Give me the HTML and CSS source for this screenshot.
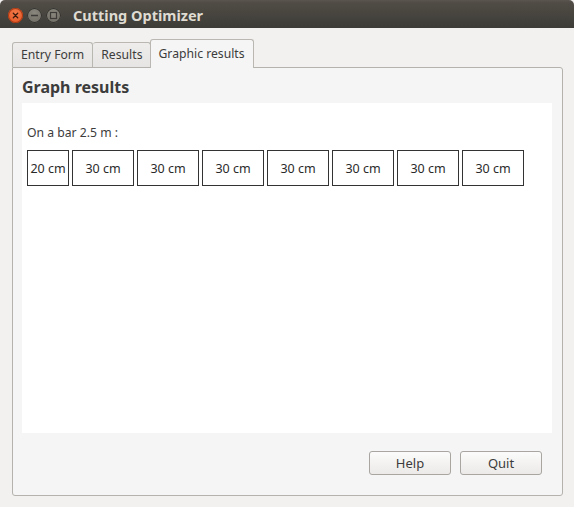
FILE: index.html
```html
<!DOCTYPE html>
<html>
<head>
<meta charset="utf-8">
<link rel="stylesheet" href="styles.css">
</head>
<body>
<div class="window">
  <div class="titlebar">
    <div class="wbtns">
      <span class="wbtn close"><svg width="15" height="15" viewBox="0 0 15 15"><path d="M5.3 5.3 L9.7 9.7 M9.7 5.3 L5.3 9.7" stroke="#3a1a0c" stroke-width="1.3" stroke-linecap="round"/></svg></span>
      <span class="wbtn"><svg width="15" height="15" viewBox="0 0 15 15"><path d="M4 7.5 H11" stroke="#3c3b37" stroke-width="1.5"/></svg></span>
      <span class="wbtn"><svg width="15" height="15" viewBox="0 0 15 15"><rect x="4.5" y="4.5" width="6" height="6" fill="none" stroke="#3c3b37" stroke-width="1.2"/></svg></span>
    </div>
    <span class="title">Cutting Optimizer</span>
  </div>
  <div class="content">
    <div class="tabs">
      <div class="tab">Entry Form</div>
      <div class="tab">Results</div>
      <div class="tab active">Graphic results</div>
    </div>
    <div class="pane">
      <h1 class="heading">Graph results</h1>
      <div class="canvas">
        <div class="caption">On a bar 2.5 m :</div>
        <div class="bars">
          <div class="piece short">20 cm</div>
          <div class="piece">30 cm</div>
          <div class="piece">30 cm</div>
          <div class="piece">30 cm</div>
          <div class="piece">30 cm</div>
          <div class="piece">30 cm</div>
          <div class="piece">30 cm</div>
          <div class="piece">30 cm</div>
        </div>
      </div>
      <div class="actions">
        <button class="btn">Help</button>
        <button class="btn">Quit</button>
      </div>
    </div>
  </div>
</div>
</body>
</html>
```
FILE: styles.css
```css
html, body {
  margin: 0;
  padding: 0;
  background: #f2f1f0;
}
.window {
  width: 574px;
  height: 507px;
  background: #f2f1f0;
  font-family: "Noto Sans", "Open Sans", sans-serif;
  color: #3c3c3c;
  overflow: hidden;
}
.titlebar {
  height: 28px;
  background: linear-gradient(#5a564f 0px, #504c45 3px, #3d3c38 28px);
  border-top-left-radius: 5px;
  border-top-right-radius: 5px;
  display: flex;
  align-items: center;
  box-sizing: border-box;
  padding-left: 8px;
}
.wbtns {
  display: flex;
  gap: 4px;
  margin-top: 2px;
}
.wbtn {
  width: 15px;
  height: 15px;
  border-radius: 50%;
  background: radial-gradient(circle at 50% 35%, #8a877f, #6a675f);
  box-shadow: inset 0 0 0 1px #34332f;
  display: flex;
}
.wbtn.close {
  background: radial-gradient(circle at 50% 35%, #f47a4a, #e2501e);
  box-shadow: inset 0 0 0 1px #a83a14;
}
.title {
  margin-left: 12px;
  font-weight: bold;
  font-size: 14.5px;
  color: #dfdbd2;
  margin-top: 1px;
}
.content {
  padding: 11px 11px 0 12px;
}
.tabs {
  display: flex;
  align-items: flex-end;
  height: 28px;
  position: relative;
  z-index: 1;
}
.tab {
  height: 25px;
  box-sizing: border-box;
  border: 1px solid #bab7b2;
  border-bottom: none;
  border-radius: 3px 3px 0 0;
  background: linear-gradient(#eeedeb, #e6e5e3);
  font-size: 12.2px;
  line-height: 24px;
  padding: 0 8px;
  color: #3c3c3c;
}
.tab + .tab {
  border-left: none;
}
.tab.active {
  height: 29px;
  margin-bottom: -1px;
  background: #f5f5f5;
  line-height: 27px;
  border-left: 1px solid #bab7b2;
  margin-left: -1px;
  padding: 0 8px 0 7px;
}
.pane {
  width: 551px;
  height: 429px;
  box-sizing: border-box;
  border: 1px solid #b5b2ad;
  border-radius: 0 3px 3px 3px;
  background: #f5f5f5;
  padding: 0 10px 0 9px;
  display: flex;
  flex-direction: column;
}
.heading {
  margin: 0;
  height: 35px;
  font-size: 16px;
  font-weight: bold;
  line-height: 38px;
  color: #3c3c3c;
}
.canvas {
  background: #ffffff;
  height: 330px;
  padding: 21px 0 0 5px;
  box-sizing: border-box;
}
.caption {
  font-size: 12.2px;
  line-height: 18px;
  color: #3c3c3c;
}
.bars {
  display: flex;
  gap: 3px;
  margin-top: 8px;
}
.piece {
  width: 62px;
  height: 36px;
  box-sizing: border-box;
  border: 1px solid #333333;
  display: flex;
  align-items: center;
  justify-content: center;
  font-size: 12.5px;
  color: #2a2a2a;
}
.piece.short {
  width: 42px;
}
.actions {
  display: flex;
  justify-content: flex-end;
  gap: 9px;
  margin-top: 18px;
  padding-right: 10px;
}
.btn {
  width: 82px;
  height: 24px;
  border: 1px solid #a9a6a1;
  border-radius: 3px;
  background: linear-gradient(#fbfbfb, #eceae8);
  font-family: "Noto Sans", "Open Sans", sans-serif;
  font-size: 13px;
  color: #3c3c3c;
  padding: 0;
}
```
